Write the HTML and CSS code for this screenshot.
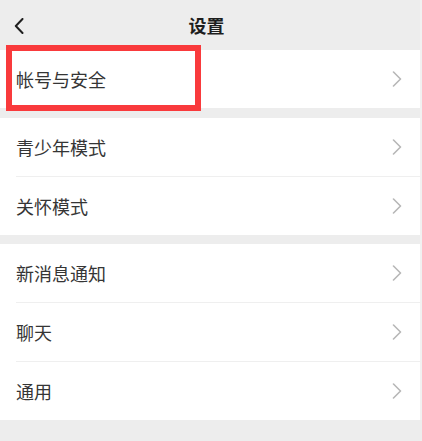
FILE: index.html
```html
<!DOCTYPE html>
<html lang="zh-CN">
<head>
<meta charset="utf-8">
<title>设置</title>
<link rel="stylesheet" href="styles.css">
</head>
<body>
<div class="app">
  <header class="header">
    <span class="back">
      <svg width="10" height="16" viewBox="0 0 10 16"><path d="M8.5 1 L1.8 8 L8.5 15" fill="none" stroke="#1f1f1f" stroke-width="2" stroke-linecap="round" stroke-linejoin="round"/></svg>
    </span>
    <h1 class="title">设置</h1>
    <span></span>
  </header>

  <section class="group group-first">
    <div class="row"><span class="label">帐号与安全</span><svg class="chev" width="10" height="16" viewBox="0 0 10 16"><path d="M1.5 1 L8.5 8 L1.5 15" fill="none" stroke="#b7b7b7" stroke-width="1.6" stroke-linecap="round" stroke-linejoin="round"/></svg></div>
    <div class="highlight"></div>
  </section>

  <section class="group group-second">
    <div class="row"><span class="label">青少年模式</span><svg class="chev" width="10" height="16" viewBox="0 0 10 16"><path d="M1.5 1 L8.5 8 L1.5 15" fill="none" stroke="#b7b7b7" stroke-width="1.6" stroke-linecap="round" stroke-linejoin="round"/></svg></div>
    <div class="row"><span class="label">关怀模式</span><svg class="chev" width="10" height="16" viewBox="0 0 10 16"><path d="M1.5 1 L8.5 8 L1.5 15" fill="none" stroke="#b7b7b7" stroke-width="1.6" stroke-linecap="round" stroke-linejoin="round"/></svg></div>
  </section>

  <section class="group group-third">
    <div class="row"><span class="label">新消息通知</span><svg class="chev" width="10" height="16" viewBox="0 0 10 16"><path d="M1.5 1 L8.5 8 L1.5 15" fill="none" stroke="#b7b7b7" stroke-width="1.6" stroke-linecap="round" stroke-linejoin="round"/></svg></div>
    <div class="row"><span class="label">聊天</span><svg class="chev" width="10" height="16" viewBox="0 0 10 16"><path d="M1.5 1 L8.5 8 L1.5 15" fill="none" stroke="#b7b7b7" stroke-width="1.6" stroke-linecap="round" stroke-linejoin="round"/></svg></div>
    <div class="row"><span class="label">通用</span><svg class="chev" width="10" height="16" viewBox="0 0 10 16"><path d="M1.5 1 L8.5 8 L1.5 15" fill="none" stroke="#b7b7b7" stroke-width="1.6" stroke-linecap="round" stroke-linejoin="round"/></svg></div>
  </section>
</div>
</body>
</html>
```

FILE: styles.css
```css
html, body {
  margin: 0;
  padding: 0;
  background: #ededed;
}
body {
  width: 422px;
  height: 441px;
  overflow: hidden;
  font-family: "Noto Sans CJK SC", "Noto Sans", sans-serif;
  color: #333333;
}
.app {
  width: 420px;
  border-right: 2px solid #f1f1f1;
}
.header {
  height: 50px;
  display: grid;
  grid-template-columns: 1fr auto 1fr;
  align-items: center;
  padding-right: 7px;
  background: #ededed;
}
.back {
  padding-left: 14px;
  display: flex;
  align-items: center;
  padding-top: 2px;
}
.title {
  margin: 0;
  font-size: 18px;
  font-weight: 700;
  color: #1e1e1e;
  line-height: 1;
}
.group {
  position: relative;
  background: #ffffff;
  padding-left: 16px;
}
.group-second {
  margin-top: 10px;
}
.group-third {
  margin-top: 9px;
}
.row {
  height: 58px;
  display: flex;
  align-items: center;
  justify-content: space-between;
  padding-right: 18px;
}
.row + .row {
  border-top: 1px solid #efefef;
}
.label {
  font-size: 18px;
  line-height: 1;
  color: #353535;
}
.chev {
  display: block;
}
.highlight {
  position: absolute;
  left: 6px;
  top: -5px;
  width: 195px;
  height: 66px;
  box-sizing: border-box;
  border: 6.5px solid #f93a3c;
}
```
